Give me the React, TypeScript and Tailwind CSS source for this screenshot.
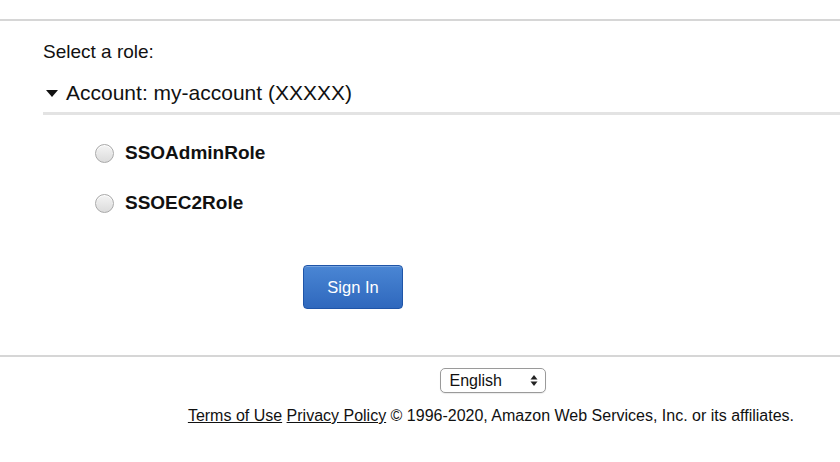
import React from "react";

function Radio() {
  return (
    <span className="inline-block w-[19px] h-[19px] rounded-full border border-[#a9a9a9] bg-gradient-to-b from-[#f4f4f4] to-[#dcdcdc] shadow-[inset_0_1px_0_#fff]" />
  );
}

export default function App() {
  return (
    <div
      className="w-[840px] h-[462px] bg-white text-[#111] overflow-hidden"
      style={{ fontFamily: '"Liberation Sans", Arial, sans-serif' }}
    >
      <div className="h-[19px]" />
      <div className="h-[2px] bg-[#d6d6d6]" />
      <div className="pl-[43px]">
        <div className="pt-[20px] text-[19px] leading-[22px]">Select a role:</div>
        <div className="mt-[17px] flex items-center h-[26px]">
          <svg width="14" height="10" viewBox="0 0 14 10" className="ml-[2px] mr-[7px]">
            <polygon points="1,2 13,2 7,9" fill="#111" />
          </svg>
          <span className="text-[21px] leading-[26px]">Account: my-account (XXXXX)</span>
        </div>
        <div className="mt-[6px] h-[3px] bg-[#e3e3e3]" />
        <div className="pl-[52px] pt-[29px] flex flex-col gap-[31px]">
          <div className="flex items-center gap-[11px] h-[19px]">
            <Radio />
            <span className="text-[19px] font-bold">SSOAdminRole</span>
          </div>
          <div className="flex items-center gap-[11px] h-[19px]">
            <Radio />
            <span className="text-[19px] font-bold">SSOEC2Role</span>
          </div>
        </div>
        <div className="pl-[260px] pt-[52px]">
          <button className="w-[100px] h-[44px] rounded-[4px] border border-[#1f55a8] bg-gradient-to-b from-[#4a86d4] to-[#2f68bd] text-white text-[16.5px] shadow-[inset_0_1px_0_rgba(255,255,255,0.25)]">
            Sign In
          </button>
        </div>
      </div>
      <div className="mt-[46px] h-[2px] bg-[#d6d6d6]" />
      <div className="flex justify-center pt-[11px] pl-[145px]">
        <div className="w-[106px] h-[25px] rounded-[5px] border border-[#9a9a9a] bg-white flex items-center justify-between pl-[9px] pr-[7px] shadow-[0_1px_1px_rgba(0,0,0,0.08)]">
          <span className="text-[16px] leading-[20px]">English</span>
          <svg width="8" height="13" viewBox="0 0 8 13">
            <polygon points="4,1 7.5,5.5 0.5,5.5" fill="#222" />
            <polygon points="4,12 7.5,7.5 0.5,7.5" fill="#222" />
          </svg>
        </div>
      </div>
      <div className="flex justify-end pr-[46px] pt-[14px] text-[16px] leading-[18px]">
        <span>
          <a className="underline">Terms of Use</a> <a className="underline">Privacy Policy</a> © 1996-2020, Amazon Web Services, Inc. or its affiliates.
        </span>
      </div>
    </div>
  );
}
